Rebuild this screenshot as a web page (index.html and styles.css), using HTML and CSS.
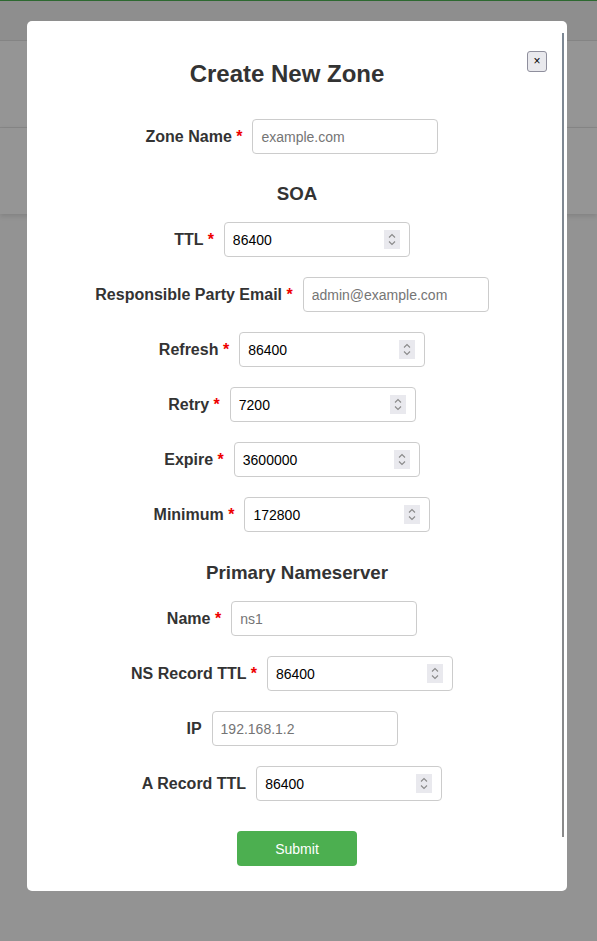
FILE: index.html
```html
<!DOCTYPE html>
<html>
<head>
<meta charset="utf-8">
<title>Create New Zone</title>
<link rel="stylesheet" href="styles.css">
</head>
<body>
<div class="page">
  <div class="topbar"></div>
  <div class="toolbar"></div>
  <div class="section"></div>
</div>
<div class="overlay">
  <div class="modal">
    <div class="scroll-thumb"></div>
    <button class="close" type="button">×</button>
    <h2 class="title">Create New Zone</h2>
    <form class="form">
      <div class="row"><label>Zone Name <span class="req">*</span></label><span class="field"><input type="text" placeholder="example.com"></span></div>
      <h3 class="heading">SOA</h3>
      <div class="row"><label>TTL <span class="req">*</span></label><span class="field"><input type="number" value="86400"><span class="spin"><svg width="16" height="19" viewBox="0 0 16 19"><path d="M5 7.5 L8 4.5 L11 7.5 M5 11.5 L8 14.5 L11 11.5" fill="none" stroke="#8a8a8a" stroke-width="1.1"/></svg></span></span></div>
      <div class="row"><label>Responsible Party Email <span class="req">*</span></label><span class="field"><input type="text" placeholder="admin@example.com"></span></div>
      <div class="row"><label>Refresh <span class="req">*</span></label><span class="field"><input type="number" value="86400"><span class="spin"><svg width="16" height="19" viewBox="0 0 16 19"><path d="M5 7.5 L8 4.5 L11 7.5 M5 11.5 L8 14.5 L11 11.5" fill="none" stroke="#8a8a8a" stroke-width="1.1"/></svg></span></span></div>
      <div class="row"><label>Retry <span class="req">*</span></label><span class="field"><input type="number" value="7200"><span class="spin"><svg width="16" height="19" viewBox="0 0 16 19"><path d="M5 7.5 L8 4.5 L11 7.5 M5 11.5 L8 14.5 L11 11.5" fill="none" stroke="#8a8a8a" stroke-width="1.1"/></svg></span></span></div>
      <div class="row"><label>Expire <span class="req">*</span></label><span class="field"><input type="number" value="3600000"><span class="spin"><svg width="16" height="19" viewBox="0 0 16 19"><path d="M5 7.5 L8 4.5 L11 7.5 M5 11.5 L8 14.5 L11 11.5" fill="none" stroke="#8a8a8a" stroke-width="1.1"/></svg></span></span></div>
      <div class="row"><label>Minimum <span class="req">*</span></label><span class="field"><input type="number" value="172800"><span class="spin"><svg width="16" height="19" viewBox="0 0 16 19"><path d="M5 7.5 L8 4.5 L11 7.5 M5 11.5 L8 14.5 L11 11.5" fill="none" stroke="#8a8a8a" stroke-width="1.1"/></svg></span></span></div>
      <h3 class="heading heading-ns">Primary Nameserver</h3>
      <div class="row"><label>Name <span class="req">*</span></label><span class="field"><input type="text" placeholder="ns1"></span></div>
      <div class="row"><label>NS Record TTL <span class="req">*</span></label><span class="field"><input type="number" value="86400"><span class="spin"><svg width="16" height="19" viewBox="0 0 16 19"><path d="M5 7.5 L8 4.5 L11 7.5 M5 11.5 L8 14.5 L11 11.5" fill="none" stroke="#8a8a8a" stroke-width="1.1"/></svg></span></span></div>
      <div class="row"><label>IP</label><span class="field"><input type="text" placeholder="192.168.1.2"></span></div>
      <div class="row"><label>A Record TTL</label><span class="field"><input type="number" value="86400"><span class="spin"><svg width="16" height="19" viewBox="0 0 16 19"><path d="M5 7.5 L8 4.5 L11 7.5 M5 11.5 L8 14.5 L11 11.5" fill="none" stroke="#8a8a8a" stroke-width="1.1"/></svg></span></span></div>
      <div class="actions"><button class="submit" type="button">Submit</button></div>
    </form>
  </div>
</div>
</body>
</html>
```

FILE: styles.css
```css
html, body {
  margin: 0;
  padding: 0;
}
body {
  background: #f5f5f5;
  font-family: "Liberation Sans", Arial, sans-serif;
  color: #333;
  height: 941px;
  overflow: hidden;
}
.topbar {
  height: 39px;
  border-top: 1px solid #4caf50;
  border-bottom: 1px solid #dcdcdc;
  background: #ededed;
}
.toolbar {
  height: 86px;
  background: #f8f8f8;
  border-bottom: 1px solid #e2e2e2;
}
.section {
  height: 86px;
  background: #f8f8f8;
  box-shadow: 0 2px 5px rgba(0, 0, 0, 0.12);
}
.overlay {
  position: fixed;
  inset: 0;
  background: rgba(0, 0, 0, 0.4);
  padding-top: 21px;
}
.modal {
  position: relative;
  box-sizing: border-box;
  width: 540px;
  height: 870px;
  margin-left: 27px;
  background: #fff;
  border-radius: 5px;
  padding: 30px 20px 25px;
}
.scroll-thumb {
  position: absolute;
  top: 12px;
  left: 535px;
  width: 2px;
  height: 804px;
  background: linear-gradient(#7d8894, #8a8a8a);
}
.close {
  float: right;
  font-family: "Liberation Sans", Arial, sans-serif;
  font-size: 12px;
  line-height: 15px;
  width: 20px;
  height: 21px;
  padding: 0;
  border: 1px solid #8f8f9d;
  border-radius: 3px;
  background: #e9e9ed;
  color: #000;
}
.title {
  margin: 9px 0 0;
  font-size: 24px;
  font-weight: bold;
  text-align: center;
  color: #333;
  line-height: 28px;
}
.form {
  margin-top: 31px;
}
.row {
  display: flex;
  justify-content: center;
  align-items: center;
  margin-bottom: 20px;
  padding-right: 10px;
}
.row label {
  font-size: 16px;
  font-weight: bold;
  color: #333;
  margin-right: 10px;
}
.req {
  color: #e00;
}
.field {
  position: relative;
  display: block;
  width: 186px;
  height: 35px;
}
.field input {
  box-sizing: border-box;
  width: 186px;
  height: 35px;
  padding: 8px;
  border: 1px solid #ccc;
  border-radius: 4px;
  font-family: "Liberation Sans", Arial, sans-serif;
  font-size: 14px;
  color: #000;
  margin: 0;
  display: block;
  -moz-appearance: textfield;
  appearance: textfield;
}
.field input::placeholder {
  color: #757575;
}
.field input::-webkit-inner-spin-button,
.field input::-webkit-outer-spin-button {
  -webkit-appearance: none;
  margin: 0;
}
.spin {
  position: absolute;
  right: 10px;
  top: 8px;
  width: 16px;
  height: 19px;
  background: #e9e9ee;
  display: block;
}
.spin svg {
  display: block;
}
.heading {
  margin: 29px 0 17.5px;
  font-size: 18.72px;
  font-weight: bold;
  text-align: center;
  color: #333;
  line-height: 21.5px;
}
.heading-ns {
  margin-top: 30px;
}
.actions {
  display: flex;
  justify-content: center;
  margin-top: 30px;
}
.submit {
  width: 120px;
  height: 35px;
  border: none;
  border-radius: 4px;
  background: #4caf50;
  color: #fff;
  font-family: "Liberation Sans", Arial, sans-serif;
  font-size: 14px;
}
```
